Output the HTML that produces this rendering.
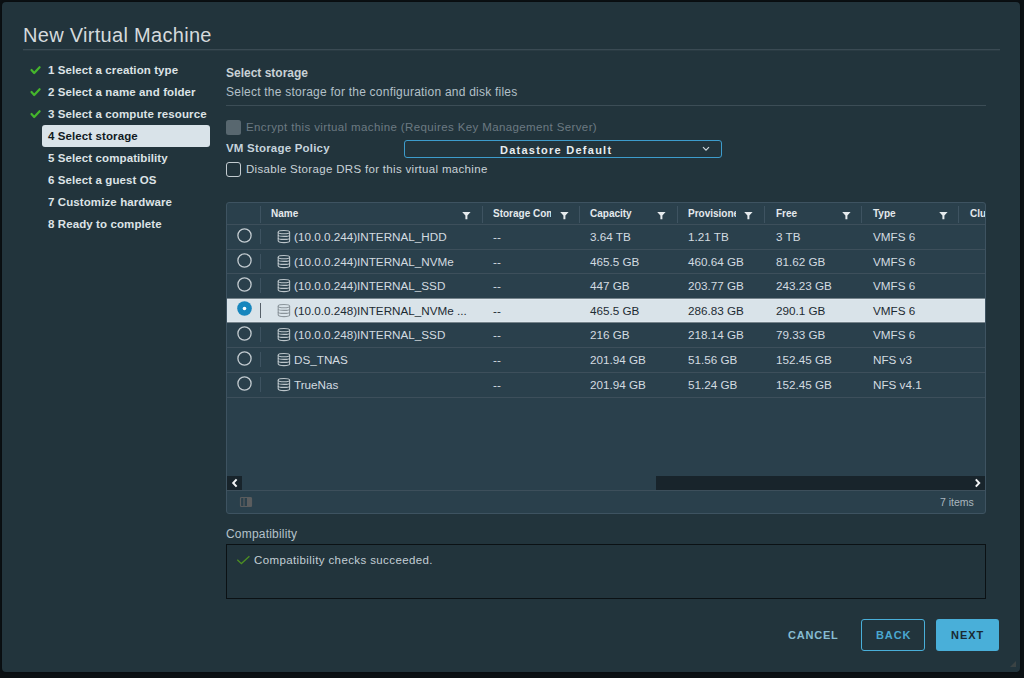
<!DOCTYPE html>
<html><head><meta charset="utf-8">
<style>
*{margin:0;padding:0;box-sizing:border-box}
html,body{width:1024px;height:678px;overflow:hidden;background:#0b1013;font-family:"Liberation Sans",sans-serif}
.a{position:absolute;white-space:nowrap;line-height:14px}
#dlg{position:absolute;left:2px;top:2px;width:1018px;height:670px;background:#22343c;border-radius:4px;box-shadow:0 0 2px 0 rgba(0,0,0,.5)}
.title{font-size:20px;color:#d5dadd;letter-spacing:0.3px;line-height:22px}
.nav{font-size:11.5px;font-weight:bold;color:#dde3e6;letter-spacing:0.1px}
.chk{position:absolute}
.sel{position:absolute;left:42px;top:125px;width:168px;height:22px;background:#d9e3e9;border-radius:3px}
.grid{position:absolute;left:226px;top:202px;width:760px;height:312px;border:1px solid #3e5361;border-radius:3px;background:#2a404c;overflow:hidden}
.hl{position:absolute;left:0;width:758px;height:1px;background:#3b505d}
.vs{position:absolute;width:1px;background:#3e5361}
.ht{font-size:10px;font-weight:bold;color:#e4e9ec}
.rt{font-size:11.7px;color:#d2dadf}
</style></head><body>
<div id="dlg"></div>
<div class="a title" style="left:23px;top:24px">New Virtual Machine</div>
<div style="position:absolute;left:23px;top:49px;width:977px;height:1px;background:#3a4a53"></div><div style="position:absolute;left:23px;top:50px;width:977px;height:1px;background:#2a3b43"></div>

<!-- nav -->
<div class="sel"></div>
<div class="a nav" style="left:48px;top:63px">1 Select a creation type</div>
<div class="a nav" style="left:48px;top:85px">2 Select a name and folder</div>
<div class="a nav" style="left:48px;top:107px">3 Select a compute resource</div>
<div class="a nav" style="left:48px;top:129px;color:#111a1f">4 Select storage</div>
<div class="a nav" style="left:48px;top:151px">5 Select compatibility</div>
<div class="a nav" style="left:48px;top:173px">6 Select a guest OS</div>
<div class="a nav" style="left:48px;top:195px">7 Customize hardware</div>
<div class="a nav" style="left:48px;top:217px">8 Ready to complete</div>
<svg class="chk" style="left:0;top:0" width="60" height="130">
<g fill="none" stroke="#45b62c" stroke-width="2.2" stroke-linecap="round" stroke-linejoin="round">
<path d="M31.5 70 L34.2 73 L39.6 67.2"/>
<path d="M31.5 92 L34.2 95 L39.6 89.2"/>
<path d="M31.5 114 L34.2 117 L39.6 111.2"/>
</g></svg>

<!-- content -->
<div class="a" style="left:226px;top:66px;font-size:12px;font-weight:bold;color:#c9d1d6">Select storage</div>
<div class="a" style="left:226px;top:85px;font-size:12px;color:#b3c0c8;letter-spacing:0.23px">Select the storage for the configuration and disk files</div>
<div style="position:absolute;left:226px;top:105px;width:760px;height:1px;background:#3c4d56"></div>

<div style="position:absolute;left:226px;top:120px;width:15px;height:14.5px;background:#58676f;border-radius:2.5px"></div>
<div class="a" style="left:246px;top:120px;font-size:11.5px;color:#6c7a82;letter-spacing:0.38px">Encrypt this virtual machine (Requires Key Management Server)</div>
<div class="a" style="left:226px;top:141px;font-size:11.5px;font-weight:bold;color:#c5d3dc;letter-spacing:0.2px">VM Storage Policy</div>
<div style="position:absolute;left:404px;top:140px;width:318px;height:18px;border:1px solid #3d9ccc;border-radius:3px"></div>
<div class="a" style="left:500px;top:143px;font-size:11px;font-weight:bold;color:#e8edf0;letter-spacing:1.25px">Datastore Default</div>
<svg style="position:absolute;left:700px;top:144px" width="12" height="10"><path d="M3 3.2 L6 6.2 L9 3.2" fill="none" stroke="#d0d8dd" stroke-width="1.2"/></svg>
<div style="position:absolute;left:226px;top:162px;width:15px;height:15px;border:1px solid #c4ccd1;border-radius:3px"></div>
<div class="a" style="left:246px;top:162px;font-size:11.5px;color:#c9d2d7;letter-spacing:0.32px">Disable Storage DRS for this virtual machine</div>

<!-- grid -->
<div style="position:absolute;left:226px;top:202px;width:760px;height:312px;border:1px solid #3e5361;border-radius:3px;background:#2a404c;"></div>
<div style="position:absolute;left:227px;top:203px;width:758px;height:310px;overflow:hidden;border-radius:2px">
<div style="position:absolute;left:0px;top:21px;width:758px;height:1px;background:#3d4f5b"></div>
<div style="position:absolute;left:0px;top:95px;width:758px;height:25px;background:#d9e3e9"></div>
<div style="position:absolute;left:0px;top:96px;width:758px;height:1px;background:#dfe8ee"></div>
<div style="position:absolute;left:0px;top:118px;width:758px;height:1px;background:#dfe8ee"></div>
<div style="position:absolute;left:0px;top:46px;width:758px;height:1px;background:#3d4f5b"></div>
<div style="position:absolute;left:0px;top:70px;width:758px;height:1px;background:#3d4f5b"></div>
<div style="position:absolute;left:0px;top:144px;width:758px;height:1px;background:#3d4f5b"></div>
<div style="position:absolute;left:0px;top:169px;width:758px;height:1px;background:#3d4f5b"></div>
<div style="position:absolute;left:0px;top:194px;width:758px;height:1px;background:#3d4f5b"></div>
<div style="position:absolute;left:0px;top:95px;width:758px;height:1px;background:#75838b"></div>
<div style="position:absolute;left:0px;top:119px;width:758px;height:1px;background:#75838b"></div>
<div style="position:absolute;left:33px;top:3px;width:1px;height:17px;background:#3e5361"></div>
<div style="position:absolute;left:255px;top:3px;width:1px;height:17px;background:#3e5361"></div>
<div style="position:absolute;left:352px;top:3px;width:1px;height:17px;background:#3e5361"></div>
<div style="position:absolute;left:450px;top:3px;width:1px;height:17px;background:#3e5361"></div>
<div style="position:absolute;left:537px;top:3px;width:1px;height:17px;background:#3e5361"></div>
<div style="position:absolute;left:634px;top:3px;width:1px;height:17px;background:#3e5361"></div>
<div style="position:absolute;left:731px;top:3px;width:1px;height:17px;background:#3e5361"></div>
<div class="a ht" style="left:44px;top:4px;">Name</div>
<svg style="position:absolute;left:235.0px;top:8px" width="9" height="9" viewBox="0 0 9 9"><path d="M0.2 1 H8.6 L5.4 4.6 V8.2 H3.4 V4.6 Z" fill="#e6ebee"/></svg>
<div class="a ht" style="left:266px;top:4px;width:58px;overflow:hidden">Storage Compatibility</div>
<svg style="position:absolute;left:332.5px;top:8px" width="9" height="9" viewBox="0 0 9 9"><path d="M0.2 1 H8.6 L5.4 4.6 V8.2 H3.4 V4.6 Z" fill="#e6ebee"/></svg>
<div class="a ht" style="left:363px;top:4px;">Capacity</div>
<svg style="position:absolute;left:430.0px;top:8px" width="9" height="9" viewBox="0 0 9 9"><path d="M0.2 1 H8.6 L5.4 4.6 V8.2 H3.4 V4.6 Z" fill="#e6ebee"/></svg>
<div class="a ht" style="left:461px;top:4px;width:48px;overflow:hidden">Provisioned Space</div>
<svg style="position:absolute;left:517.0px;top:8px" width="9" height="9" viewBox="0 0 9 9"><path d="M0.2 1 H8.6 L5.4 4.6 V8.2 H3.4 V4.6 Z" fill="#e6ebee"/></svg>
<div class="a ht" style="left:549px;top:4px;">Free</div>
<svg style="position:absolute;left:614.5px;top:8px" width="9" height="9" viewBox="0 0 9 9"><path d="M0.2 1 H8.6 L5.4 4.6 V8.2 H3.4 V4.6 Z" fill="#e6ebee"/></svg>
<div class="a ht" style="left:646px;top:4px;">Type</div>
<svg style="position:absolute;left:712.0px;top:8px" width="9" height="9" viewBox="0 0 9 9"><path d="M0.2 1 H8.6 L5.4 4.6 V8.2 H3.4 V4.6 Z" fill="#e6ebee"/></svg>
<div class="a ht" style="left:743px;top:4px;">Cluster</div>
<svg style="position:absolute;left:9.5px;top:24.5px" width="15" height="15"><circle cx="7.5" cy="7.5" r="6.6" fill="none" stroke="#c3cbd0" stroke-width="1.3"/></svg>
<div style="position:absolute;left:33px;top:26px;width:1px;height:15px;background:#3e5361"></div>
<svg style="position:absolute;left:49.5px;top:26.30000000000001px" width="14" height="15" viewBox="0 0 14 15"><g fill="none" stroke="#bcc5ca" stroke-width="1.1"><path d="M1.2 3 C1.2 0.9 12.6 0.9 12.6 3 V12 C12.6 14.1 1.2 14.1 1.2 12 Z"/><path d="M1.2 3.2 C1.2 5.2 12.6 5.2 12.6 3.2"/><path d="M1.2 5.9 C1.2 7.9 12.6 7.9 12.6 5.9"/><path d="M1.2 8.9 C1.2 10.9 12.6 10.9 12.6 8.9"/></g></svg>
<div class="a rt" style="left:67px;top:27px;color:#d3dbe0">(10.0.0.244)INTERNAL_HDD</div>
<div class="a rt" style="left:266px;top:27px;color:#d3dbe0">--</div>
<div class="a rt" style="left:363px;top:27px;color:#d3dbe0">3.64 TB</div>
<div class="a rt" style="left:461px;top:27px;color:#d3dbe0">1.21 TB</div>
<div class="a rt" style="left:549px;top:27px;color:#d3dbe0">3 TB</div>
<div class="a rt" style="left:646px;top:27px;color:#d3dbe0">VMFS 6</div>
<svg style="position:absolute;left:9.5px;top:49.5px" width="15" height="15"><circle cx="7.5" cy="7.5" r="6.6" fill="none" stroke="#c3cbd0" stroke-width="1.3"/></svg>
<div style="position:absolute;left:33px;top:51px;width:1px;height:15px;background:#3e5361"></div>
<svg style="position:absolute;left:49.5px;top:51.30000000000001px" width="14" height="15" viewBox="0 0 14 15"><g fill="none" stroke="#bcc5ca" stroke-width="1.1"><path d="M1.2 3 C1.2 0.9 12.6 0.9 12.6 3 V12 C12.6 14.1 1.2 14.1 1.2 12 Z"/><path d="M1.2 3.2 C1.2 5.2 12.6 5.2 12.6 3.2"/><path d="M1.2 5.9 C1.2 7.9 12.6 7.9 12.6 5.9"/><path d="M1.2 8.9 C1.2 10.9 12.6 10.9 12.6 8.9"/></g></svg>
<div class="a rt" style="left:67px;top:52px;color:#d3dbe0">(10.0.0.244)INTERNAL_NVMe</div>
<div class="a rt" style="left:266px;top:52px;color:#d3dbe0">--</div>
<div class="a rt" style="left:363px;top:52px;color:#d3dbe0">465.5 GB</div>
<div class="a rt" style="left:461px;top:52px;color:#d3dbe0">460.64 GB</div>
<div class="a rt" style="left:549px;top:52px;color:#d3dbe0">81.62 GB</div>
<div class="a rt" style="left:646px;top:52px;color:#d3dbe0">VMFS 6</div>
<svg style="position:absolute;left:9.5px;top:73.5px" width="15" height="15"><circle cx="7.5" cy="7.5" r="6.6" fill="none" stroke="#c3cbd0" stroke-width="1.3"/></svg>
<div style="position:absolute;left:33px;top:75px;width:1px;height:15px;background:#3e5361"></div>
<svg style="position:absolute;left:49.5px;top:75.30000000000001px" width="14" height="15" viewBox="0 0 14 15"><g fill="none" stroke="#bcc5ca" stroke-width="1.1"><path d="M1.2 3 C1.2 0.9 12.6 0.9 12.6 3 V12 C12.6 14.1 1.2 14.1 1.2 12 Z"/><path d="M1.2 3.2 C1.2 5.2 12.6 5.2 12.6 3.2"/><path d="M1.2 5.9 C1.2 7.9 12.6 7.9 12.6 5.9"/><path d="M1.2 8.9 C1.2 10.9 12.6 10.9 12.6 8.9"/></g></svg>
<div class="a rt" style="left:67px;top:76px;color:#d3dbe0">(10.0.0.244)INTERNAL_SSD</div>
<div class="a rt" style="left:266px;top:76px;color:#d3dbe0">--</div>
<div class="a rt" style="left:363px;top:76px;color:#d3dbe0">447 GB</div>
<div class="a rt" style="left:461px;top:76px;color:#d3dbe0">203.77 GB</div>
<div class="a rt" style="left:549px;top:76px;color:#d3dbe0">243.23 GB</div>
<div class="a rt" style="left:646px;top:76px;color:#d3dbe0">VMFS 6</div>
<svg style="position:absolute;left:9.5px;top:98px" width="15" height="15"><circle cx="7.5" cy="7.5" r="7.3" fill="#1686bd"/><circle cx="7.5" cy="7.5" r="1.8" fill="#fff"/></svg>
<div style="position:absolute;left:33px;top:100px;width:1px;height:15px;background:#566069"></div>
<svg style="position:absolute;left:49.5px;top:100.30000000000001px" width="14" height="15" viewBox="0 0 14 15"><g fill="none" stroke="#8a949a" stroke-width="1.1"><path d="M1.2 3 C1.2 0.9 12.6 0.9 12.6 3 V12 C12.6 14.1 1.2 14.1 1.2 12 Z"/><path d="M1.2 3.2 C1.2 5.2 12.6 5.2 12.6 3.2"/><path d="M1.2 5.9 C1.2 7.9 12.6 7.9 12.6 5.9"/><path d="M1.2 8.9 C1.2 10.9 12.6 10.9 12.6 8.9"/></g></svg>
<div class="a rt" style="left:67px;top:101px;color:#1d2b33">(10.0.0.248)INTERNAL_NVMe ...</div>
<div class="a rt" style="left:266px;top:101px;color:#1d2b33">--</div>
<div class="a rt" style="left:363px;top:101px;color:#1d2b33">465.5 GB</div>
<div class="a rt" style="left:461px;top:101px;color:#1d2b33">286.83 GB</div>
<div class="a rt" style="left:549px;top:101px;color:#1d2b33">290.1 GB</div>
<div class="a rt" style="left:646px;top:101px;color:#1d2b33">VMFS 6</div>
<svg style="position:absolute;left:9.5px;top:122.5px" width="15" height="15"><circle cx="7.5" cy="7.5" r="6.6" fill="none" stroke="#c3cbd0" stroke-width="1.3"/></svg>
<div style="position:absolute;left:33px;top:124px;width:1px;height:15px;background:#3e5361"></div>
<svg style="position:absolute;left:49.5px;top:124.30000000000001px" width="14" height="15" viewBox="0 0 14 15"><g fill="none" stroke="#bcc5ca" stroke-width="1.1"><path d="M1.2 3 C1.2 0.9 12.6 0.9 12.6 3 V12 C12.6 14.1 1.2 14.1 1.2 12 Z"/><path d="M1.2 3.2 C1.2 5.2 12.6 5.2 12.6 3.2"/><path d="M1.2 5.9 C1.2 7.9 12.6 7.9 12.6 5.9"/><path d="M1.2 8.9 C1.2 10.9 12.6 10.9 12.6 8.9"/></g></svg>
<div class="a rt" style="left:67px;top:125px;color:#d3dbe0">(10.0.0.248)INTERNAL_SSD</div>
<div class="a rt" style="left:266px;top:125px;color:#d3dbe0">--</div>
<div class="a rt" style="left:363px;top:125px;color:#d3dbe0">216 GB</div>
<div class="a rt" style="left:461px;top:125px;color:#d3dbe0">218.14 GB</div>
<div class="a rt" style="left:549px;top:125px;color:#d3dbe0">79.33 GB</div>
<div class="a rt" style="left:646px;top:125px;color:#d3dbe0">VMFS 6</div>
<svg style="position:absolute;left:9.5px;top:147.5px" width="15" height="15"><circle cx="7.5" cy="7.5" r="6.6" fill="none" stroke="#c3cbd0" stroke-width="1.3"/></svg>
<div style="position:absolute;left:33px;top:149px;width:1px;height:15px;background:#3e5361"></div>
<svg style="position:absolute;left:49.5px;top:149.3px" width="14" height="15" viewBox="0 0 14 15"><g fill="none" stroke="#bcc5ca" stroke-width="1.1"><path d="M1.2 3 C1.2 0.9 12.6 0.9 12.6 3 V12 C12.6 14.1 1.2 14.1 1.2 12 Z"/><path d="M1.2 3.2 C1.2 5.2 12.6 5.2 12.6 3.2"/><path d="M1.2 5.9 C1.2 7.9 12.6 7.9 12.6 5.9"/><path d="M1.2 8.9 C1.2 10.9 12.6 10.9 12.6 8.9"/></g></svg>
<div class="a rt" style="left:67px;top:150px;color:#d3dbe0">DS_TNAS</div>
<div class="a rt" style="left:266px;top:150px;color:#d3dbe0">--</div>
<div class="a rt" style="left:363px;top:150px;color:#d3dbe0">201.94 GB</div>
<div class="a rt" style="left:461px;top:150px;color:#d3dbe0">51.56 GB</div>
<div class="a rt" style="left:549px;top:150px;color:#d3dbe0">152.45 GB</div>
<div class="a rt" style="left:646px;top:150px;color:#d3dbe0">NFS v3</div>
<svg style="position:absolute;left:9.5px;top:172.5px" width="15" height="15"><circle cx="7.5" cy="7.5" r="6.6" fill="none" stroke="#c3cbd0" stroke-width="1.3"/></svg>
<div style="position:absolute;left:33px;top:174px;width:1px;height:15px;background:#3e5361"></div>
<svg style="position:absolute;left:49.5px;top:174.3px" width="14" height="15" viewBox="0 0 14 15"><g fill="none" stroke="#bcc5ca" stroke-width="1.1"><path d="M1.2 3 C1.2 0.9 12.6 0.9 12.6 3 V12 C12.6 14.1 1.2 14.1 1.2 12 Z"/><path d="M1.2 3.2 C1.2 5.2 12.6 5.2 12.6 3.2"/><path d="M1.2 5.9 C1.2 7.9 12.6 7.9 12.6 5.9"/><path d="M1.2 8.9 C1.2 10.9 12.6 10.9 12.6 8.9"/></g></svg>
<div class="a rt" style="left:67px;top:175px;color:#d3dbe0">TrueNas</div>
<div class="a rt" style="left:266px;top:175px;color:#d3dbe0">--</div>
<div class="a rt" style="left:363px;top:175px;color:#d3dbe0">201.94 GB</div>
<div class="a rt" style="left:461px;top:175px;color:#d3dbe0">51.24 GB</div>
<div class="a rt" style="left:549px;top:175px;color:#d3dbe0">152.45 GB</div>
<div class="a rt" style="left:646px;top:175px;color:#d3dbe0">NFS v4.1</div>
<div style="position:absolute;left:0px;top:273px;width:15px;height:14px;background:#18242b"></div>
<div style="position:absolute;left:429px;top:273px;width:329px;height:14px;background:#18242b"></div>
<svg style="position:absolute;left:4px;top:275px" width="8" height="10"><path d="M5.6 1.4 L2.2 5 L5.6 8.6" fill="none" stroke="#f2f4f5" stroke-width="2"/></svg>
<svg style="position:absolute;left:747px;top:275px" width="8" height="10"><path d="M1.8 1.4 L5.2 5 L1.8 8.6" fill="none" stroke="#f2f4f5" stroke-width="2"/></svg>
<div style="position:absolute;left:0px;top:287px;width:758px;height:1px;background:#3d4f5b"></div>
<svg style="position:absolute;left:12px;top:293px" width="14" height="12" viewBox="0 0 14 12"><rect x="1.5" y="1.5" width="11" height="9" rx="1" fill="none" stroke="#5b5d5e" stroke-width="1.2"/><rect x="9" y="1.5" width="3.5" height="9" fill="#5b5d5e"/><line x1="5" y1="1.5" x2="5" y2="10.5" stroke="#5b5d5e" stroke-width="1.2"/><line x1="8.6" y1="1.5" x2="8.6" y2="10.5" stroke="#5b5d5e" stroke-width="1.2"/></svg>
<div class="a " style="left:713px;top:292px;font-size:10.5px;color:#aab7bf">7 items</div>
</div>
<!-- compatibility -->
<div class="a" style="left:226px;top:527px;font-size:12px;color:#b5c2ca;letter-spacing:0.2px">Compatibility</div>
<div style="position:absolute;left:226px;top:544px;width:760px;height:55px;border:1px solid #0b1114"></div>
<svg style="position:absolute;left:230px;top:550px" width="24" height="20"><path d="M7.3 9.7 L11.4 13.6 L19.4 6.2" fill="none" stroke="#4d8f23" stroke-width="1.3"/></svg>
<div class="a" style="left:254px;top:553px;font-size:11.5px;color:#c3ced5;letter-spacing:0.39px">Compatibility checks succeeded.</div>

<svg style="position:absolute;left:1008px;top:659px" width="10" height="10"><path d="M2 8 L8 2 L8 8 Z" fill="#3b4344"/></svg>
<!-- buttons -->
<div class="a" style="left:788px;top:628px;font-size:11px;font-weight:bold;color:#86bcd3;letter-spacing:0.8px;-webkit-text-stroke:0px">CANCEL</div>
<div style="position:absolute;left:861px;top:619px;width:64px;height:32px;border:1px solid #49afd9;border-radius:3px"></div>
<div class="a" style="left:876px;top:628px;font-size:11px;font-weight:bold;color:#4aa8d0;letter-spacing:0.9px">BACK</div>
<div style="position:absolute;left:936px;top:619px;width:63px;height:32px;background:#49afd9;border-radius:3px"></div>
<div class="a" style="left:951px;top:628px;font-size:11px;font-weight:bold;color:#1a2a32;letter-spacing:1px">NEXT</div>
</body></html>
